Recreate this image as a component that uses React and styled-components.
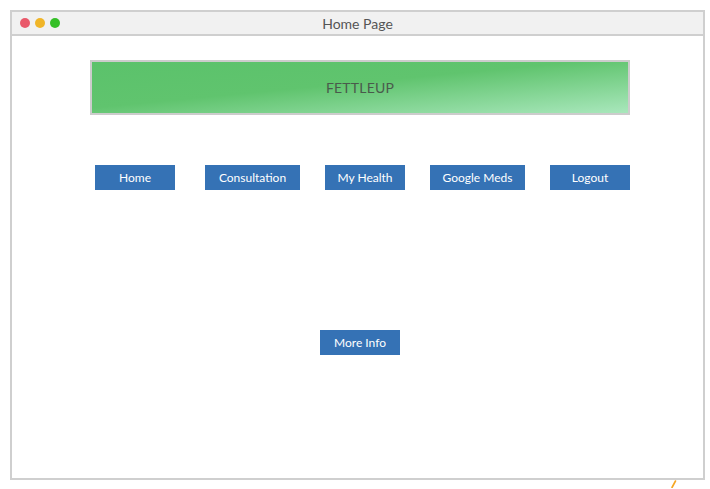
import React from "react";
import styled, { createGlobalStyle } from "styled-components";

const GlobalStyle = createGlobalStyle`
  body {
    margin: 0;
    background: #ffffff;
    font-family: Lato, "Open Sans", "Liberation Sans", sans-serif;
  }
`;

const navItems = [
  { label: "Home", width: 80, extra: 5 },
  { label: "Consultation", width: 95 },
  { label: "My Health", width: 80 },
  { label: "Google Meds", width: 95 },
  { label: "Logout", width: 80 },
];

export default function App() {
  return (
    <>
      <GlobalStyle />
      <Window>
        <TitleBar>
          <Dots>
            <Dot $color="#e9596a" />
            <Dot $color="#f0b528" />
            <Dot $color="#35bf27" />
          </Dots>
          <Title>Home Page</Title>
          <span />
        </TitleBar>
        <Content>
          <Banner>FETTLEUP</Banner>
          <Nav>
            {navItems.map((item) => (
              <NavButton key={item.label} $width={item.width} $extra={item.extra}>
                {item.label}
              </NavButton>
            ))}
          </Nav>
          <MoreInfo $width={80}>More Info</MoreInfo>
        </Content>
      </Window>
      <Mark>
        <svg width="6" height="8" viewBox="0 0 6 8">
          <path d="M1 7.5 L4.5 1" stroke="#f5a623" strokeWidth="1.6" strokeLinecap="round" />
        </svg>
      </Mark>
    </>
  );
}

const Window = styled.div`
  margin: 10px 0 0 10px;
  width: 695px;
  height: 470px;
  border: 2px solid #cfcfcf;
  box-sizing: border-box;
  background: #ffffff;
  display: flex;
  flex-direction: column;
`;

const TitleBar = styled.div`
  height: 22px;
  background: #f1f1f1;
  border-bottom: 2px solid #cfcfcf;
  display: grid;
  grid-template-columns: 1fr auto 1fr;
  align-items: center;
`;

const Dots = styled.div`
  display: flex;
  gap: 5px;
  padding-left: 8px;
`;

const Dot = styled.span`
  width: 10px;
  height: 10px;
  border-radius: 50%;
  background: ${(p) => p.$color};
`;

const Title = styled.div`
  font-size: 14px;
  color: #555555;
`;

const Content = styled.div`
  display: flex;
  flex-direction: column;
  align-items: flex-start;
  padding-top: 24px;
`;

const Banner = styled.div`
  margin-left: 78px;
  width: 540px;
  height: 55px;
  box-sizing: border-box;
  border: 2px solid #cccccc;
  background: linear-gradient(to bottom right, #5bc26b 0%, #60c46e 45%, #a9e7bc 100%);
  display: flex;
  align-items: center;
  justify-content: center;
  font-size: 14px;
  color: #4a5a4c;
  letter-spacing: 0.2px;
`;

const Nav = styled.div`
  display: flex;
  gap: 25px;
  margin: 50px 0 0 83px;
`;

const NavButton = styled.div`
  width: ${(p) => p.$width}px;
  height: 25px;
  margin-right: ${(p) => p.$extra || 0}px;
  background: #3572b5;
  color: #ffffff;
  font-size: 12px;
  display: flex;
  align-items: center;
  justify-content: center;
`;

const MoreInfo = styled(NavButton)`
  margin: 140px 0 0 308px;
`;

const Mark = styled.div`
  margin-left: 671px;
  line-height: 0;
`;
